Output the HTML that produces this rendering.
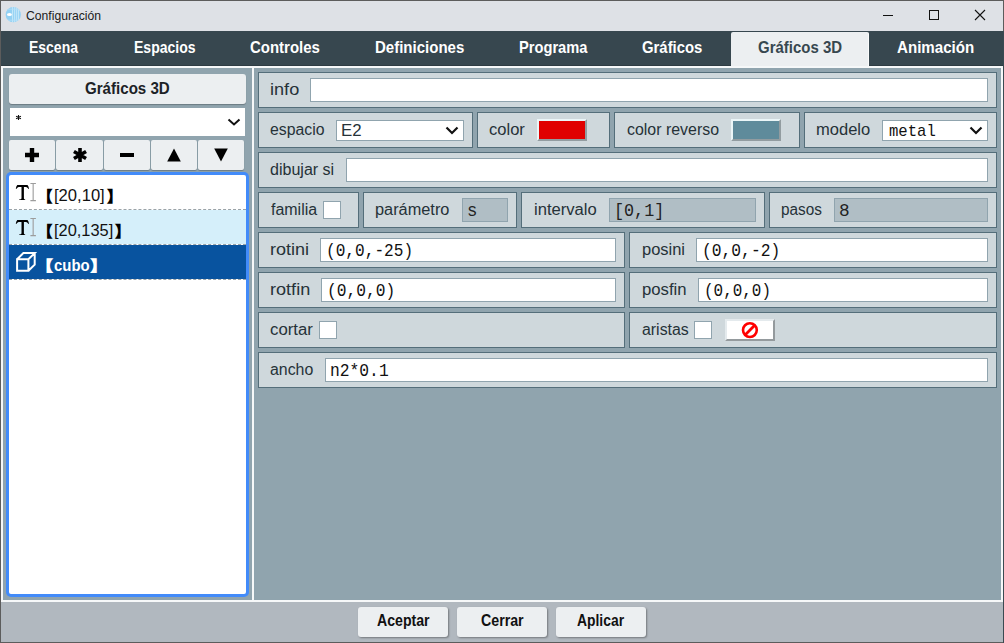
<!DOCTYPE html>
<html><head><meta charset="utf-8"><style>
html,body{margin:0;padding:0}
body{width:1004px;height:643px;position:relative;overflow:hidden;background:#5c5c5c;font-family:"Liberation Sans",sans-serif}
.a{position:absolute}
.t{white-space:pre;transform-origin:0 0}
</style></head><body>
<div class="a" style="left:0px;top:0px;width:1004px;height:643px;background:#5c5c5c"></div>
<div class="a" style="left:1px;top:1px;width:1002px;height:30px;background:#dee1e6"></div>
<div class="a" style="left:1003px;top:31px;width:1px;height:612px;background:#3a4a52"></div>
<svg class="a" style="left:5px;top:6px" width="17" height="17" viewBox="0 0 17 17"><defs><clipPath id="cc"><circle cx="8.25" cy="8.65" r="7.6"/></clipPath></defs><circle cx="8.25" cy="8.65" r="7.6" fill="#93d1f4"/><g clip-path="url(#cc)" stroke="#cdebfb" stroke-width="0.9"><path d="M7.6 0V17M9.7 0V17M11.7 0V17M13.6 0V17"/></g><path d="M2 3.2H14M2 14.2H14" stroke="#b5e0f8" stroke-width="0.8" clip-path="url(#cc)"/><ellipse cx="4.45" cy="8.5" rx="2.5" ry="1.5" fill="#fff"/></svg>
<div class="a" style="left:883px;top:15px;width:10px;height:1px;background:#111"></div>
<div class="a" style="left:929px;top:10px;width:10px;height:10px;border:1px solid #111;box-sizing:border-box"></div>
<svg class="a" style="left:974px;top:9px" width="12" height="12" viewBox="0 0 12 12"><path d="M1 1L11 11M11 1L1 11" stroke="#111" stroke-width="1.1"/></svg>
<div class="a" style="left:1px;top:31px;width:1002px;height:35px;background:#37474f"></div>
<div class="a" style="left:1px;top:65px;width:1002px;height:1px;background:#2e3c43"></div>
<div class="a" style="left:731px;top:32px;width:138px;height:34px;background:#eceff1;border-radius:2px 2px 0 0;border-right:1px solid #fafbfb;box-sizing:border-box"></div>
<div class="a" style="left:1px;top:66px;width:1002px;height:536px;background:#f6f8f9"></div>
<div class="a" style="left:3px;top:68px;width:249px;height:532px;background:#90a4ae"></div>
<div class="a" style="left:254px;top:68px;width:747px;height:532px;background:#90a4ae"></div>
<div class="a" style="left:9px;top:74px;width:237px;height:30px;background:#eceff1;border-radius:3px;box-shadow:0 1px 1px rgba(0,0,0,0.25)"></div>
<div class="a" style="left:10px;top:108px;width:235px;height:28px;background:#ffffff"></div>
<svg class="a" style="left:14px;top:113px" width="9" height="9" viewBox="0 0 9 9"><path d="M4.5 1.9V7.1M2.1 3.2L6.9 5.8M2.1 5.8L6.9 3.2" stroke="#111" stroke-width="1.1"/></svg>
<svg class="a" style="left:226px;top:117px" width="16" height="10" viewBox="0 0 16 10"><path d="M2.5 2.5L8 7.5L13.5 2.5" fill="none" stroke="#111" stroke-width="2"/></svg>
<div class="a" style="left:9px;top:140px;width:46px;height:30px;background:#eceff1;border-radius:2px;box-shadow:0 1px 1px rgba(0,0,0,0.25)"></div>
<div class="a" style="left:56px;top:140px;width:47px;height:30px;background:#eceff1;border-radius:2px;box-shadow:0 1px 1px rgba(0,0,0,0.25)"></div>
<div class="a" style="left:104px;top:140px;width:46px;height:30px;background:#eceff1;border-radius:2px;box-shadow:0 1px 1px rgba(0,0,0,0.25)"></div>
<div class="a" style="left:151px;top:140px;width:46px;height:30px;background:#eceff1;border-radius:2px;box-shadow:0 1px 1px rgba(0,0,0,0.25)"></div>
<div class="a" style="left:198px;top:140px;width:46px;height:30px;background:#eceff1;border-radius:2px;box-shadow:0 1px 1px rgba(0,0,0,0.25)"></div>
<svg class="a" style="left:25px;top:148px" width="14" height="14" viewBox="0 0 14 14"><path d="M7 0V14M0 7H14" stroke="#000" stroke-width="4.4"/></svg>
<svg class="a" style="left:72px;top:147px" width="16" height="16" viewBox="0 0 16 16"><path d="M8 1V15M1.94 4.5L14.06 11.5M1.94 11.5L14.06 4.5" stroke="#000" stroke-width="3.6"/></svg>
<div class="a" style="left:120px;top:153px;width:14px;height:4px;background:#000"></div>
<svg class="a" style="left:167px;top:148px" width="14" height="14" viewBox="0 0 14 14"><path d="M7 0.5L13.8 13.5H0.2Z" fill="#000"/></svg>
<svg class="a" style="left:214px;top:148px" width="14" height="14" viewBox="0 0 14 14"><path d="M0.2 0.5H13.8L7 13.5Z" fill="#000"/></svg>
<div class="a" style="left:6px;top:172px;width:243px;height:425px;background:#428bf9;border-radius:5px"></div>
<div class="a" style="left:9px;top:175px;width:237px;height:419px;background:#ffffff;border-radius:2px"></div>
<div class="a" style="left:9px;top:210px;width:237px;height:34px;background:#d5effa"></div>
<div class="a" style="left:9px;top:245px;width:237px;height:34px;background:#08539f"></div>
<div class="a" style="left:9px;top:209px;width:237px;height:0;border-top:1px dashed #9aa3a8"></div>
<div class="a" style="left:9px;top:244px;width:237px;height:0;border-top:1px dashed #9aa3a8"></div>
<div class="a" style="left:9px;top:279px;width:237px;height:0;border-top:1px dashed #9aa3a8"></div>
<svg class="a" style="left:14px;top:182px" width="24" height="21" viewBox="0 0 24 21"><path d="M1.8 6.7Q2.2 4.3 3.3 3.1H13.5Q14.6 4.3 15 6.7L14.5 6.9Q13.6 5.2 12.2 4.9H4.6Q3.2 5.2 2.3 6.9Z" fill="#000"/><path d="M7.5 4.2H9.9V16.4Q10.2 17.3 11.2 17.6V17.9H5.1V17.6Q7.2 17.3 7.5 16.4Z" fill="#000"/><path d="M16.4 1.5H21.9M19.15 1.5V18.6M16.4 18.6H21.9" fill="none" stroke="#9c9c9c" stroke-width="1.1"/></svg>
<svg class="a" style="left:14px;top:217px" width="24" height="21" viewBox="0 0 24 21"><path d="M1.8 6.7Q2.2 4.3 3.3 3.1H13.5Q14.6 4.3 15 6.7L14.5 6.9Q13.6 5.2 12.2 4.9H4.6Q3.2 5.2 2.3 6.9Z" fill="#000"/><path d="M7.5 4.2H9.9V16.4Q10.2 17.3 11.2 17.6V17.9H5.1V17.6Q7.2 17.3 7.5 16.4Z" fill="#000"/><path d="M16.4 1.5H21.9M19.15 1.5V18.6M16.4 18.6H21.9" fill="none" stroke="#9c9c9c" stroke-width="1.1"/></svg>
<svg class="a" style="left:14px;top:250px" width="24" height="24" viewBox="0 0 24 24"><path d="M3.1 9.2H14.4V20.7H3.1Z M3.1 9.2L9.4 3.1H20.7L14.4 9.2 M20.7 3.1V14.6L14.4 20.7" fill="none" stroke="#fff" stroke-width="2" stroke-linejoin="miter"/></svg>
<div class="a" style="left:258px;top:72px;width:739px;height:36px;background:#cfd8dc;border:1px solid #546e7a;box-sizing:border-box"></div>
<div class="a" style="left:258px;top:112px;width:215px;height:36px;background:#cfd8dc;border:1px solid #546e7a;box-sizing:border-box"></div>
<div class="a" style="left:477px;top:112px;width:133px;height:36px;background:#cfd8dc;border:1px solid #546e7a;box-sizing:border-box"></div>
<div class="a" style="left:614px;top:112px;width:186px;height:36px;background:#cfd8dc;border:1px solid #546e7a;box-sizing:border-box"></div>
<div class="a" style="left:804px;top:112px;width:193px;height:36px;background:#cfd8dc;border:1px solid #546e7a;box-sizing:border-box"></div>
<div class="a" style="left:258px;top:152px;width:739px;height:36px;background:#cfd8dc;border:1px solid #546e7a;box-sizing:border-box"></div>
<div class="a" style="left:258px;top:192px;width:101px;height:36px;background:#cfd8dc;border:1px solid #546e7a;box-sizing:border-box"></div>
<div class="a" style="left:363px;top:192px;width:154px;height:36px;background:#cfd8dc;border:1px solid #546e7a;box-sizing:border-box"></div>
<div class="a" style="left:521px;top:192px;width:244px;height:36px;background:#cfd8dc;border:1px solid #546e7a;box-sizing:border-box"></div>
<div class="a" style="left:769px;top:192px;width:228px;height:36px;background:#cfd8dc;border:1px solid #546e7a;box-sizing:border-box"></div>
<div class="a" style="left:258px;top:232px;width:367px;height:36px;background:#cfd8dc;border:1px solid #546e7a;box-sizing:border-box"></div>
<div class="a" style="left:629px;top:232px;width:368px;height:36px;background:#cfd8dc;border:1px solid #546e7a;box-sizing:border-box"></div>
<div class="a" style="left:258px;top:272px;width:367px;height:36px;background:#cfd8dc;border:1px solid #546e7a;box-sizing:border-box"></div>
<div class="a" style="left:629px;top:272px;width:368px;height:36px;background:#cfd8dc;border:1px solid #546e7a;box-sizing:border-box"></div>
<div class="a" style="left:258px;top:312px;width:367px;height:36px;background:#cfd8dc;border:1px solid #546e7a;box-sizing:border-box"></div>
<div class="a" style="left:629px;top:312px;width:368px;height:36px;background:#cfd8dc;border:1px solid #546e7a;box-sizing:border-box"></div>
<div class="a" style="left:258px;top:352px;width:739px;height:36px;background:#cfd8dc;border:1px solid #546e7a;box-sizing:border-box"></div>
<div class="a" style="left:310px;top:78px;width:678px;height:24px;background:#fff;border:1px solid #90a4ae;box-sizing:border-box"></div>
<div class="a" style="left:336px;top:120px;width:128px;height:21px;background:#fff;border:1px solid #90a4ae;box-sizing:border-box"></div>
<svg class="a" style="left:444px;top:125px" width="16" height="11" viewBox="0 0 16 11"><path d="M2.5 2.5L8 8L13.5 2.5" fill="none" stroke="#111" stroke-width="2.2"/></svg>
<div class="a" style="left:537px;top:119px;width:50px;height:22px;background:#e00000;border-style:solid;border-width:2px;border-color:#eaf5f7 #929ca0 #929ca0 #eaf5f7;box-sizing:border-box"></div>
<div class="a" style="left:731px;top:119px;width:50px;height:22px;background:#5f8b9b;border-style:solid;border-width:2px;border-color:#eaf5f7 #929ca0 #929ca0 #eaf5f7;box-sizing:border-box"></div>
<div class="a" style="left:882px;top:120px;width:106px;height:21px;background:#fff;border:1px solid #90a4ae;box-sizing:border-box"></div>
<svg class="a" style="left:968px;top:125px" width="16" height="11" viewBox="0 0 16 11"><path d="M2.5 2.5L8 8L13.5 2.5" fill="none" stroke="#111" stroke-width="2.2"/></svg>
<div class="a" style="left:346px;top:158px;width:642px;height:24px;background:#fff;border:1px solid #90a4ae;box-sizing:border-box"></div>
<div class="a" style="left:323px;top:201px;width:18px;height:18px;background:#fff;border:1px solid #90a4ae;box-sizing:border-box"></div>
<div class="a" style="left:462px;top:198px;width:46px;height:24px;background:#b0bec5;border:1px solid #90a4ae;box-sizing:border-box"></div>
<div class="a" style="left:609px;top:198px;width:147px;height:24px;background:#b0bec5;border:1px solid #90a4ae;box-sizing:border-box"></div>
<div class="a" style="left:834px;top:198px;width:154px;height:24px;background:#b0bec5;border:1px solid #90a4ae;box-sizing:border-box"></div>
<div class="a" style="left:320px;top:238px;width:296px;height:24px;background:#fff;border:1px solid #90a4ae;box-sizing:border-box"></div>
<div class="a" style="left:696px;top:238px;width:292px;height:24px;background:#fff;border:1px solid #90a4ae;box-sizing:border-box"></div>
<div class="a" style="left:321px;top:278px;width:295px;height:24px;background:#fff;border:1px solid #90a4ae;box-sizing:border-box"></div>
<div class="a" style="left:698px;top:278px;width:290px;height:24px;background:#fff;border:1px solid #90a4ae;box-sizing:border-box"></div>
<div class="a" style="left:319px;top:321px;width:18px;height:18px;background:#fff;border:1px solid #90a4ae;box-sizing:border-box"></div>
<div class="a" style="left:694px;top:321px;width:18px;height:18px;background:#fff;border:1px solid #90a4ae;box-sizing:border-box"></div>
<div class="a" style="left:725px;top:319px;width:50px;height:22px;background:#fff;border-style:solid;border-width:2px;border-color:#e4eaed #949a9d #949a9d #e4eaed;box-sizing:border-box"></div>
<svg class="a" style="left:741px;top:321px" width="18" height="18" viewBox="0 0 18 18"><circle cx="8.9" cy="9.1" r="6.9" fill="none" stroke="#f00" stroke-width="2.6"/><path d="M4.3 13.7L13.5 4.5" stroke="#f00" stroke-width="2.8"/></svg>
<div class="a" style="left:325px;top:358px;width:663px;height:24px;background:#fff;border:1px solid #90a4ae;box-sizing:border-box"></div>
<div class="a" style="left:1px;top:602px;width:1002px;height:40px;background:#b1b8bf"></div>
<div class="a" style="left:358px;top:607px;width:90px;height:30px;background:#eceff1;border-radius:3px;box-shadow:1px 1px 2px rgba(0,0,0,0.35)"></div>
<div class="a" style="left:457px;top:607px;width:90px;height:30px;background:#eceff1;border-radius:3px;box-shadow:1px 1px 2px rgba(0,0,0,0.35)"></div>
<div class="a" style="left:556px;top:607px;width:90px;height:30px;background:#eceff1;border-radius:3px;box-shadow:1px 1px 2px rgba(0,0,0,0.35)"></div>
<div class="a t" style="left:25.59px;top:10.00px;font-family:'Liberation Sans';font-size:12px;line-height:12px;font-weight:400;color:#1a1a1a;transform:scaleX(1.0144)">Configuración</div>
<div class="a t" style="left:28.58px;top:39.00px;font-family:'Liberation Sans';font-size:17px;line-height:17px;font-weight:700;color:#ffffff;transform:scaleX(0.8221)">Escena</div>
<div class="a t" style="left:133.68px;top:39.00px;font-family:'Liberation Sans';font-size:17px;line-height:17px;font-weight:700;color:#ffffff;transform:scaleX(0.8247)">Espacios</div>
<div class="a t" style="left:249.84px;top:39.00px;font-family:'Liberation Sans';font-size:17px;line-height:17px;font-weight:700;color:#ffffff;transform:scaleX(0.8808)">Controles</div>
<div class="a t" style="left:374.82px;top:39.00px;font-family:'Liberation Sans';font-size:17px;line-height:17px;font-weight:700;color:#ffffff;transform:scaleX(0.8834)">Definiciones</div>
<div class="a t" style="left:519.04px;top:39.00px;font-family:'Liberation Sans';font-size:17px;line-height:17px;font-weight:700;color:#ffffff;transform:scaleX(0.8624)">Programa</div>
<div class="a t" style="left:642.44px;top:39.00px;font-family:'Liberation Sans';font-size:17px;line-height:17px;font-weight:700;color:#ffffff;transform:scaleX(0.8756)">Gráficos</div>
<div class="a t" style="left:757.64px;top:39.00px;font-family:'Liberation Sans';font-size:17px;line-height:17px;font-weight:700;color:#37474f;transform:scaleX(0.8809)">Gráficos 3D</div>
<div class="a t" style="left:896.76px;top:39.00px;font-family:'Liberation Sans';font-size:17px;line-height:17px;font-weight:700;color:#ffffff;transform:scaleX(0.8891)">Animación</div>
<div class="a t" style="left:84.79px;top:81.20px;font-family:'Liberation Sans';font-size:16px;line-height:16px;font-weight:700;color:#1c2226;transform:scaleX(0.9435)">Gráficos 3D</div>
<div class="a t" style="left:33.03px;top:187.68px;font-family:'Liberation Sans';font-size:15px;line-height:15px;font-weight:400;color:#000;transform:scale(1.4667,1.0456)">【</div>
<div class="a t" style="left:53.68px;top:186.70px;font-family:'Liberation Sans';font-size:17px;line-height:17px;font-weight:400;color:#111;transform:scaleX(0.9758)">[20,10]</div>
<div class="a t" style="left:103.51px;top:187.68px;font-family:'Liberation Sans';font-size:15px;line-height:15px;font-weight:400;color:#000;transform:scale(1.4933,1.0456)">】</div>
<div class="a t" style="left:33.03px;top:222.68px;font-family:'Liberation Sans';font-size:15px;line-height:15px;font-weight:400;color:#000;transform:scale(1.4667,1.0456)">【</div>
<div class="a t" style="left:53.69px;top:221.80px;font-family:'Liberation Sans';font-size:17px;line-height:17px;font-weight:400;color:#111;transform:scaleX(0.9644)">[20,135]</div>
<div class="a t" style="left:112.41px;top:222.68px;font-family:'Liberation Sans';font-size:15px;line-height:15px;font-weight:400;color:#000;transform:scale(1.4933,1.0456)">】</div>
<div class="a t" style="left:32.89px;top:257.85px;font-family:'Liberation Sans';font-size:15px;line-height:15px;font-weight:700;color:#fff;transform:scale(1.4824,0.9966)">【</div>
<div class="a t" style="left:53.83px;top:257.70px;font-family:'Liberation Sans';font-size:16px;line-height:16px;font-weight:700;color:#fff;transform:scaleX(0.9324)">cubo</div>
<div class="a t" style="left:88.41px;top:257.85px;font-family:'Liberation Sans';font-size:15px;line-height:15px;font-weight:700;color:#fff;transform:scale(1.4588,0.9966)">】</div>
<div class="a t" style="left:269.67px;top:81.90px;font-family:'Liberation Sans';font-size:16px;line-height:16px;font-weight:400;color:#263238;transform:scaleX(1.1333)">info</div>
<div class="a t" style="left:269.66px;top:121.90px;font-family:'Liberation Sans';font-size:16px;line-height:16px;font-weight:400;color:#263238;transform:scaleX(0.9879)">espacio</div>
<div class="a t" style="left:489.12px;top:121.90px;font-family:'Liberation Sans';font-size:16px;line-height:16px;font-weight:400;color:#263238;transform:scaleX(1.0341)">color</div>
<div class="a t" style="left:627.15px;top:121.90px;font-family:'Liberation Sans';font-size:16px;line-height:16px;font-weight:400;color:#263238;transform:scaleX(0.9956)">color reverso</div>
<div class="a t" style="left:816.27px;top:121.90px;font-family:'Liberation Sans';font-size:16px;line-height:16px;font-weight:400;color:#263238;transform:scaleX(1.0325)">modelo</div>
<div class="a t" style="left:270.15px;top:161.90px;font-family:'Liberation Sans';font-size:16px;line-height:16px;font-weight:400;color:#263238;transform:scaleX(1.0024)">dibujar si</div>
<div class="a t" style="left:270.65px;top:201.90px;font-family:'Liberation Sans';font-size:16px;line-height:16px;font-weight:400;color:#263238;transform:scaleX(0.9978)">familia</div>
<div class="a t" style="left:375.48px;top:201.90px;font-family:'Liberation Sans';font-size:16px;line-height:16px;font-weight:400;color:#263238;transform:scaleX(1.0204)">parámetro</div>
<div class="a t" style="left:533.86px;top:201.90px;font-family:'Liberation Sans';font-size:16px;line-height:16px;font-weight:400;color:#263238;transform:scaleX(1.0383)">intervalo</div>
<div class="a t" style="left:781.14px;top:201.90px;font-family:'Liberation Sans';font-size:16px;line-height:16px;font-weight:400;color:#263238;transform:scaleX(0.9576)">pasos</div>
<div class="a t" style="left:269.77px;top:241.90px;font-family:'Liberation Sans';font-size:16px;line-height:16px;font-weight:400;color:#263238;transform:scaleX(1.1267)">rotini</div>
<div class="a t" style="left:641.67px;top:241.90px;font-family:'Liberation Sans';font-size:16px;line-height:16px;font-weight:400;color:#263238;transform:scaleX(1.0289)">posini</div>
<div class="a t" style="left:269.77px;top:281.90px;font-family:'Liberation Sans';font-size:16px;line-height:16px;font-weight:400;color:#263238;transform:scaleX(1.1313)">rotfin</div>
<div class="a t" style="left:641.66px;top:281.90px;font-family:'Liberation Sans';font-size:16px;line-height:16px;font-weight:400;color:#263238;transform:scaleX(1.0429)">posfin</div>
<div class="a t" style="left:270.11px;top:321.90px;font-family:'Liberation Sans';font-size:16px;line-height:16px;font-weight:400;color:#263238;transform:scaleX(1.0475)">cortar</div>
<div class="a t" style="left:641.66px;top:321.90px;font-family:'Liberation Sans';font-size:16px;line-height:16px;font-weight:400;color:#263238;transform:scaleX(0.9923)">aristas</div>
<div class="a t" style="left:270.16px;top:361.90px;font-family:'Liberation Sans';font-size:16px;line-height:16px;font-weight:400;color:#263238;transform:scaleX(0.9917)">ancho</div>
<div class="a t" style="left:340.89px;top:123.00px;font-family:'Liberation Sans';font-size:16px;line-height:16px;font-weight:400;color:#263238;transform:scaleX(1.0514)">E2</div>
<div class="a t" style="left:888.71px;top:123.30px;font-family:'Liberation Mono';font-size:17px;line-height:17px;font-weight:400;color:#111;transform:scaleX(0.9178)">metal</div>
<div class="a t" style="left:466.94px;top:202.00px;font-family:'Liberation Mono';font-size:19px;line-height:19px;font-weight:400;color:#222;transform:scaleX(0.9091)">s</div>
<div class="a t" style="left:613.80px;top:202.00px;font-family:'Liberation Mono';font-size:19px;line-height:19px;font-weight:400;color:#222;transform:scaleX(0.8808)">[0,1]</div>
<div class="a t" style="left:839.13px;top:202.00px;font-family:'Liberation Mono';font-size:19px;line-height:19px;font-weight:400;color:#222;transform:scaleX(0.9333)">8</div>
<div class="a t" style="left:325.94px;top:242.00px;font-family:'Liberation Mono';font-size:19px;line-height:19px;font-weight:400;color:#111;transform:scaleX(0.8488)">(0,0,-25)</div>
<div class="a t" style="left:701.71px;top:242.00px;font-family:'Liberation Mono';font-size:19px;line-height:19px;font-weight:400;color:#111;transform:scaleX(0.8578)">(0,0,-2)</div>
<div class="a t" style="left:326.92px;top:282.00px;font-family:'Liberation Mono';font-size:19px;line-height:19px;font-weight:400;color:#111;transform:scaleX(0.8544)">(0,0,0)</div>
<div class="a t" style="left:703.77px;top:282.00px;font-family:'Liberation Mono';font-size:19px;line-height:19px;font-weight:400;color:#111;transform:scaleX(0.8395)">(0,0,0)</div>
<div class="a t" style="left:330.20px;top:362.00px;font-family:'Liberation Mono';font-size:19px;line-height:19px;font-weight:400;color:#111;transform:scaleX(0.8578)">n2*0.1</div>
<div class="a t" style="left:376.76px;top:613.40px;font-family:'Liberation Sans';font-size:16px;line-height:16px;font-weight:700;color:#111;transform:scaleX(0.8831)">Aceptar</div>
<div class="a t" style="left:480.53px;top:613.40px;font-family:'Liberation Sans';font-size:16px;line-height:16px;font-weight:700;color:#111;transform:scaleX(0.8872)">Cerrar</div>
<div class="a t" style="left:577.37px;top:613.40px;font-family:'Liberation Sans';font-size:16px;line-height:16px;font-weight:700;color:#111;transform:scaleX(0.8673)">Aplicar</div>
</body></html>
